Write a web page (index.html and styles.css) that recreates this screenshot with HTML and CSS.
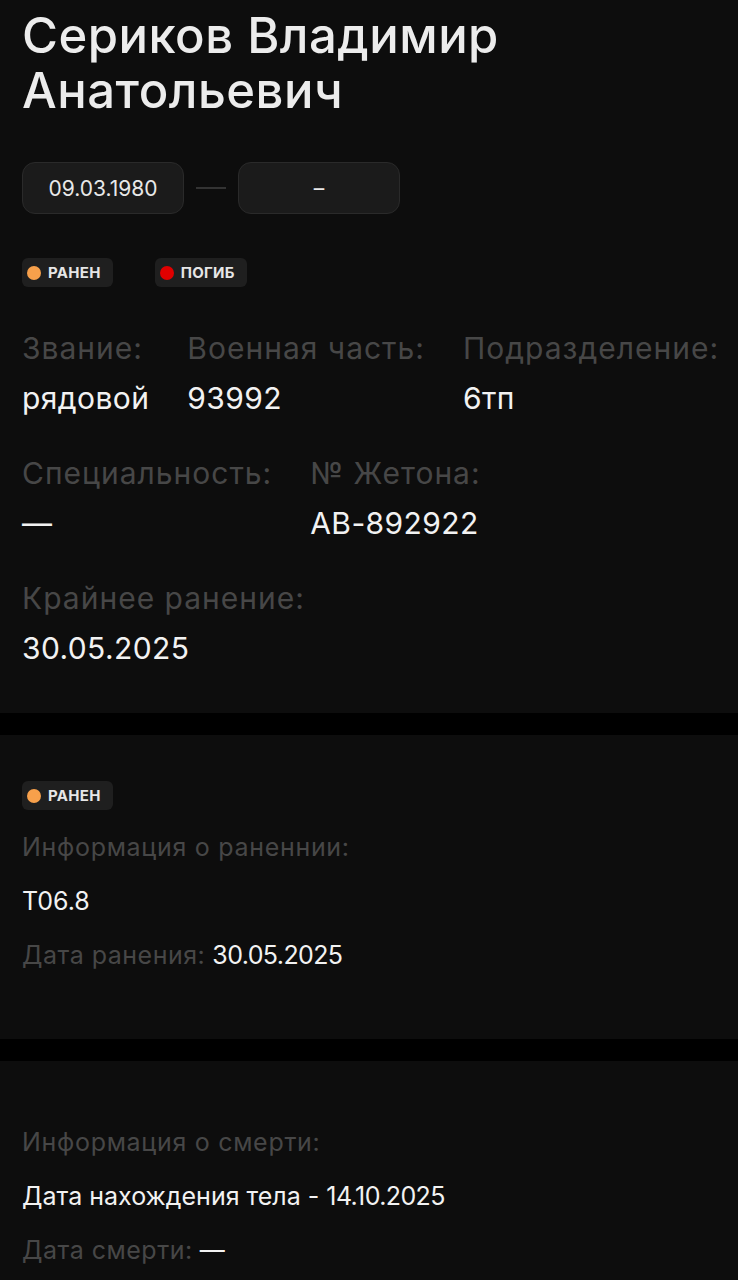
FILE: index.html
```html
<!DOCTYPE html>
<html lang="ru">
<head>
    <meta charset="UTF-8">
    <meta name="viewport" content="width=device-width, initial-scale=1.0">
    <title>Сериков Владимир Анатольевич</title>
    <link rel="stylesheet" href="styles.css">
</head>
<body>
    <section class="card card-main">
        <h1 class="person-name">Сериков Владимир Анатольевич</h1>

        <div class="dates">
            <div class="date-box">09.03.1980</div>
            <span class="date-sep"></span>
            <div class="date-box">–</div>
        </div>

        <div class="badges">
            <span class="badge"><span class="dot dot-wounded"></span>Ранен</span>
            <span class="badge"><span class="dot dot-dead"></span>Погиб</span>
        </div>

        <div class="info-row">
            <div class="info-item">
                <div class="info-label">Звание:</div>
                <div class="info-value">рядовой</div>
            </div>
            <div class="info-item">
                <div class="info-label">Военная часть:</div>
                <div class="info-value">93992</div>
            </div>
            <div class="info-item">
                <div class="info-label">Подразделение:</div>
                <div class="info-value">6тп</div>
            </div>
        </div>

        <div class="info-row">
            <div class="info-item">
                <div class="info-label">Специальность:</div>
                <div class="info-value">—</div>
            </div>
            <div class="info-item">
                <div class="info-label">№ Жетона:</div>
                <div class="info-value">АВ-892922</div>
            </div>
        </div>

        <div class="info-row">
            <div class="info-item">
                <div class="info-label">Крайнее ранение:</div>
                <div class="info-value">30.05.2025</div>
            </div>
        </div>
    </section>

    <section class="card card-wound">
        <span class="badge"><span class="dot dot-wounded"></span>Ранен</span>
        <div class="block-label">Информация о раненнии:</div>
        <div class="block-value">Т06.8</div>
        <div class="block-line"><span class="muted">Дата ранения:</span> <span class="date">30.05.2025</span></div>
    </section>

    <section class="card card-death">
        <div class="block-label">Информация о смерти:</div>
        <div class="block-value">Дата нахождения тела - <span class="date">14.10.2025</span></div>
        <div class="block-line"><span class="muted">Дата смерти:</span> —</div>
    </section>
</body>
</html>
```

FILE: styles.css
```css
body {
    margin: 0;
    background-color: #000;
    color: #f2f2f2;
    font-family: "Inter", "Noto Sans", sans-serif;
}

.card {
    background-color: #0d0d0d;
    padding: 0 22px;
    margin-bottom: 22px;
}

.card-main {
    padding-top: 8px;
    padding-bottom: 48px;
}

.person-name {
    margin: 0;
    font-size: 49px;
    font-weight: 500;
    line-height: 55px;
    letter-spacing: 0.5px;
    color: #ececec;
    max-width: 560px;
}

.dates {
    display: flex;
    align-items: center;
    gap: 12px;
    margin-top: 44px;
}

.date-box {
    width: 162px;
    height: 52px;
    box-sizing: border-box;
    display: flex;
    align-items: center;
    justify-content: center;
    background-color: #1b1b1b;
    border: 1px solid #2a2a2a;
    border-radius: 13px;
    font-size: 21px;
    color: #e8e8e8;
}

.date-sep {
    width: 30px;
    height: 2px;
    background-color: #333;
}

.badges {
    display: flex;
    gap: 42px;
    margin-top: 44px;
}

.badge {
    display: inline-flex;
    align-items: center;
    gap: 7px;
    height: 29px;
    padding: 0 12px 0 5px;
    background-color: #1f1f1f;
    border-radius: 6px;
    font-size: 15px;
    font-weight: 700;
    letter-spacing: 0.3px;
    text-transform: uppercase;
    color: #e6e6e6;
}

.dot {
    width: 14px;
    height: 14px;
    border-radius: 50%;
}

.dot-wounded {
    background-color: #f7a04b;
}

.dot-dead {
    background-color: #e00000;
}

.info-row {
    display: flex;
    gap: 38px;
    margin-top: 44px;
}

.info-row + .info-row {
    margin-top: 41px;
}

.info-item {
    flex-shrink: 0;
    white-space: nowrap;
}

.info-label {
    font-size: 30px;
    line-height: 34px;
    letter-spacing: 1px;
    color: #474747;
}

.info-value {
    margin-top: 16px;
    font-size: 30px;
    line-height: 34px;
    letter-spacing: 0.4px;
    color: #f2f2f2;
}

.card-wound {
    padding-top: 46px;
    padding-bottom: 69px;
}

.card-death {
    padding-top: 66px;
    padding-bottom: 20px;
}

.block-label {
    margin-top: 22px;
    font-size: 25px;
    line-height: 30px;
    letter-spacing: 0.7px;
    color: #474747;
}

.card-death .block-label {
    margin-top: 0;
}

.block-value {
    margin-top: 24px;
    font-size: 25px;
    line-height: 30px;
    color: #f2f2f2;
}

.block-line {
    margin-top: 24px;
    font-size: 25px;
    line-height: 30px;
    color: #f2f2f2;
}

.date {
    letter-spacing: -0.6px;
}

.muted {
    color: #474747;
    letter-spacing: 0.5px;
}
```
